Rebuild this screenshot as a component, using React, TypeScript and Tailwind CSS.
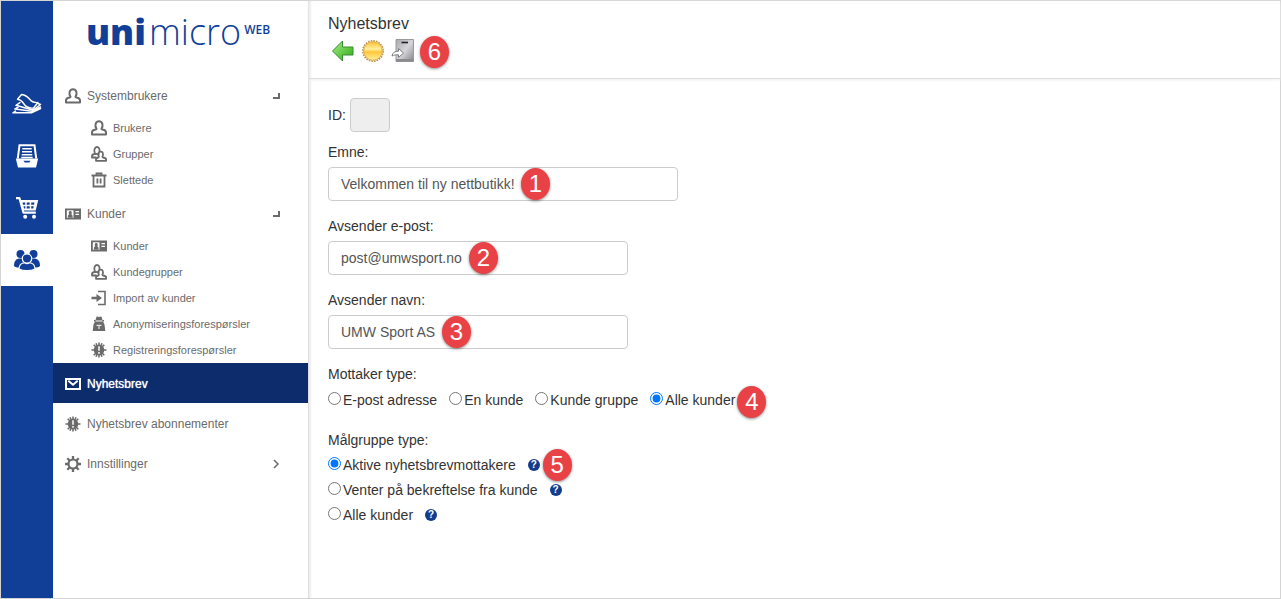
import { useState } from 'react'
import type { ReactNode } from 'react'
import clsx from 'clsx'

type IconProps = { className?: string }

function UserIcon({ className }: IconProps) {
  return (
    <svg viewBox="0 0 16 16" className={className} fill="none" stroke="currentColor" strokeWidth="2" strokeLinejoin="round">
      <path d="M5.500 8.700C4.300 7.500 4.300 5.400 4.600 4C5 2.300 6.300 1.200 8 1.200s3 1.100 3.400 2.800c.3 1.400.3 3.500-.9 4.700c0 .5.300.7.900.800c2.400.3 3.600 1.200 3.600 3V14.500H1v-2c0-1.800 1.200-2.700 3.600-3c.6-.1.900-.3.900-.8z" />
    </svg>
  )
}

function UsersIcon({ className }: IconProps) {
  return (
    <svg viewBox="0 0 16 16" className={className} fill="none" stroke="currentColor" strokeWidth="1.800" strokeLinejoin="round">
      <path d="M5.500 11.500H1v-1.300C1 8.800 2 8.300 3.400 8C4 7.900 4 7.500 3.800 7C3.300 5.900 3.300 3.900 3.600 2.900C4 1.600 4.900 1 6 1s2 .6 2.400 1.900c.3 1 .2 1.900 0 2.900" />
      <path d="M4 8h4.500" />
      <path d="M7.900 10.800C7.200 9.700 7.100 8.200 7.400 7.300C7.800 6.200 8.700 5.600 9.700 5.600s1.900.6 2.200 1.700c.3 1 .1 2.500-.5 3.500c0 .4.200.6.700.7c2 .3 3 .8 3 1.900V14.800H5v-1.400c0-1.100.7-1.600 2.200-1.900c.5-.1.700-.3.700-.7z" />
    </svg>
  )
}

function TrashIcon({ className }: IconProps) {
  return (
    <svg viewBox="0 0 16 16" className={className} fill="none" stroke="currentColor" strokeWidth="1.800">
      <path d="M0.500 3.500h15M2.500 3.500V14.500h11V3.500M5.500 3.500V1.400h5v2.100M6.400 6.500v5M9.600 6.500v5" />
    </svg>
  )
}

function CardIcon({ className }: IconProps) {
  return (
    <svg viewBox="0 0 16 16" className={className}>
      <path d="M0 2.500h16v11H0z" fill="currentColor" />
      <path d="M1.800 4.300h6.700v7.500H1.800z" fill="#fff" />
      <path d="M5.200 5c1.500 0 1.700 1 1.500 2.300l-.4 1.200c1 .3 1.400.8 1.400 3.300H2.800c0-2.500.4-3 1.400-3.300l-.4-1.200C3.600 6 3.800 5 5.200 5z" fill="currentColor" />
      <path d="M10.500 5.700h3.500M10.500 8.300h3.500" stroke="#fff" strokeWidth="1.200" />
    </svg>
  )
}

function ImportIcon({ className }: IconProps) {
  return (
    <svg viewBox="0 0 16 16" className={className}>
      <path d="M7 1.500h7v13H7" fill="none" stroke="currentColor" strokeWidth="1.600" />
      <path d="M0.500 6.800h5V4l5.500 4-5.500 4V9.200h-5z" fill="currentColor" />
    </svg>
  )
}

function AnonymousIcon({ className }: IconProps) {
  return (
    <svg viewBox="0 0 16 16" className={className}>
      <path d="M5.500.7C6.500.2 7 1 8 1s1.500-.8 2.500-.3L11.500 4H13v1.500h-1L13.500 8.500l.8 6.500H1.700l.8-6.500L4 5.500H3V4h1.500z" fill="currentColor" />
      <path d="M4.500 5h7M5.500 9.300h5M8 9.500v3.500" stroke="#fff" strokeWidth="1" />
    </svg>
  )
}

function AlertGearIcon({ className }: IconProps) {
  return (
    <svg viewBox="0 0 16 16" className={className}>
      <circle cx="8" cy="8" r="5.300" fill="currentColor" />
      <path d="M8 .5v15M.5 8h15M2.700 2.700l10.600 10.600M2.700 13.300L13.300 2.700M5 1.200l6 13.600M11 1.200L5 14.800" stroke="currentColor" strokeWidth="1.600" />
      <path d="M8 4.200v4.600M8 10v1.700" stroke="#fff" strokeWidth="1.500" />
    </svg>
  )
}

function GearIcon({ className }: IconProps) {
  return (
    <svg viewBox="0 0 16 16" className={className} fill="none" stroke="currentColor">
      <circle cx="8" cy="8" r="4.500" strokeWidth="2.200" />
      <path d="M8 0v3M8 13V16M0 8h3M13 8H16M2.300 2.300l2.200 2.200M11.500 11.500l2.200 2.200M2.300 13.700l2.200-2.200M11.500 4.500l2.200-2.200" strokeWidth="2.300" />
    </svg>
  )
}

function MailIcon({ className }: IconProps) {
  return (
    <svg viewBox="0 0 16 16" className={className} fill="none" stroke="currentColor" strokeWidth="2">
      <path d="M1 3h14v10H1z" />
      <path d="M3.300 4.800l4.700 4 4.700-4" />
    </svg>
  )
}

function PapersIcon() {
  return (
    <svg viewBox="0 0 30 24" className="w-[30px] h-6" fill="none" stroke="currentColor" strokeLinejoin="round" strokeLinecap="round">
      <path d="M9.500 2.500C13 3 15.500 4.500 17.500 7c2 2.600 4.500 4 8.500 3.500L21.500 16c-4.500.5-7.500-1-9.500-4C10.200 9.300 8.200 7.700 5.500 7.300z" strokeWidth="1.400" />
      <path d="M8 10.500L4 13.300l15.500 4.400 3-.7 6-4.500-2-.8" strokeWidth="1.500" />
      <path d="M6 15.300l-3 1.700 17 2.200 8.500-4.200M3.500 19.200L1 20.800h18.500l9-4.300" strokeWidth="1.600" />
    </svg>
  )
}

function ArchiveIcon() {
  return (
    <svg viewBox="0 0 24 24" className="size-6">
      <path d="M2.800 14.500L4.500 1.200h15l1.700 13.300" fill="none" stroke="currentColor" strokeWidth="2" />
      <path d="M7.300 4.700h9.400M7 7.700h10M6.700 10.700h10.600M6.300 13.500h11.400" stroke="currentColor" strokeWidth="1.600" />
      <path d="M.800 14.500h22.400L21 23.500H3z" fill="currentColor" />
      <path d="M8.500 16.800h7l-1.200 1.700H9.700z" fill="#113f98" />
    </svg>
  )
}

function CartIcon() {
  return (
    <svg viewBox="0 0 24 24" className="size-6">
      <path d="M1 2.200h3.500l4 14.500h12.300" fill="none" stroke="currentColor" strokeWidth="2.200" strokeLinejoin="round" />
      <path d="M5 4h18.200l-2.500 10.500H7.600z" fill="currentColor" />
      <path d="M7.500 6.500h2.700v2.300H8zM11.700 6.500h3v2.300h-3zM16.200 6.500h3.200l-.3 2.300h-2.900zM8.500 10.200h1.800v2.200H9zM11.700 10.200h3v2.200h-3zM16.200 10.200h2.500l-.4 2.200h-2.100z" fill="#113f98" />
      <circle cx="10.200" cy="20.700" r="2" fill="currentColor" />
      <circle cx="19" cy="20.700" r="2" fill="currentColor" />
    </svg>
  )
}

function PeopleIcon() {
  return (
    <svg viewBox="0 0 28 22" className="w-7 h-[22px]" fill="currentColor">
      <circle cx="7.500" cy="5" r="4" />
      <circle cx="20.500" cy="5" r="4" />
      <path d="M1 17c0-5 2-7.500 6.500-7.500h13C25 9.500 27 12 27 17c-1 1-3 1.500-5 1.500H6C4 18.500 2 18 1 17z" />
      <circle cx="14" cy="9.500" r="4.700" stroke="#fff" strokeWidth="1.200" />
      <path d="M6 20c0-4 2.500-6.200 5.500-6.200 1.600 1 3.400 1 5 0 3 0 5.500 2.200 5.500 6.200-4 2.200-12 2.200-16 0z" stroke="#fff" strokeWidth="1.200" />
    </svg>
  )
}

function BackIcon() {
  return (
    <svg viewBox="0 0 24 24" className="size-6">
      <defs>
        <linearGradient id="back" x1="0" y1="0" x2="1" y2="1">
          <stop offset="0" stopColor="#a6f08a" />
          <stop offset="1" stopColor="#2aa80e" />
        </linearGradient>
      </defs>
      <path d="M1.500 12L11.500 2v6H22v8H11.500v6z" fill="url(#back)" stroke="#3c8a35" strokeLinejoin="round" />
    </svg>
  )
}

function NewIcon() {
  return (
    <svg viewBox="0 0 24 24" className="size-6">
      <defs>
        <linearGradient id="sun" x1="0" y1="0" x2="0" y2="1">
          <stop offset="0" stopColor="#ffc12a" />
          <stop offset=".4" stopColor="#fff0a0" />
          <stop offset=".55" stopColor="#ffc638" />
          <stop offset="1" stopColor="#fff2a0" />
        </linearGradient>
      </defs>
      <circle cx="12" cy="12" r="10.200" fill="none" stroke="#bd934e" strokeWidth="1.600" strokeDasharray="1.600 1.070" />
      <circle cx="12" cy="12" r="9.300" fill="url(#sun)" stroke="#dfa945" />
    </svg>
  )
}

function SaveIcon() {
  return (
    <svg viewBox="0 0 24 24" className="size-6">
      <defs>
        <linearGradient id="disk" x1="0" y1="0" x2="1" y2="1">
          <stop offset="0" stopColor="#a8a8ac" />
          <stop offset=".5" stopColor="#d6d6da" />
          <stop offset="1" stopColor="#838388" />
        </linearGradient>
      </defs>
      <path d="M5 .500h17.500V22.500H5z" fill="url(#disk)" stroke="#9a9a9e" />
      <path d="M5 20h17.500v2.500H5z" fill="#8a8a8e" />
      <path d="M10.500 3.500h6.500" stroke="#222" strokeWidth="1.600" />
      <path d="M1 17c.5-3.500 3-4.800 6.500-4.800V9.500l5 4.500-5 4.500v-2.700c-3 0-4.500.2-6.500 1.200z" fill="#fff" stroke="#7e7e82" />
    </svg>
  )
}

function HelpIcon() {
  return (
    <button type="button" aria-label="Hjelp" className="flex size-3 items-center justify-center rounded-full bg-[#143c8c] text-[10px] leading-3 font-bold text-white">
      ?
    </button>
  )
}

function Marker({ className, children }: { className: string; children: ReactNode }) {
  return (
    <span className={clsx('absolute z-10 flex h-8 w-[29px] items-center justify-center rounded-[50%] bg-[#e84246] text-2xl text-white shadow-[0_1px_3px_rgba(0,0,0,0.45)]', className)}>
      {children}
    </span>
  )
}

const groups = [
  {
    label: 'Systembrukere',
    Icon: UserIcon,
    items: [
      { label: 'Brukere', Icon: UserIcon },
      { label: 'Grupper', Icon: UsersIcon },
      { label: 'Slettede', Icon: TrashIcon },
    ],
  },
  {
    label: 'Kunder',
    Icon: CardIcon,
    items: [
      { label: 'Kunder', Icon: CardIcon },
      { label: 'Kundegrupper', Icon: UsersIcon },
      { label: 'Import av kunder', Icon: ImportIcon },
      { label: 'Anonymiseringsforespørsler', Icon: AnonymousIcon },
      { label: 'Registreringsforespørsler', Icon: AlertGearIcon },
    ],
  },
]

const rail = [
  { label: 'Innhold', Icon: PapersIcon },
  { label: 'Arkiv', Icon: ArchiveIcon },
  { label: 'Butikk', Icon: CartIcon },
  { label: 'Kunder', Icon: PeopleIcon, active: true },
]

const fields = [
  { id: 'emne', label: 'Emne:', value: 'Velkommen til ny nettbutikk!', width: 'w-[350px]', marker: 'left-[193px]' },
  { id: 'epost', label: 'Avsender e-post:', value: 'post@umwsport.no', width: 'w-[300px]', marker: 'left-[141px]' },
  { id: 'navn', label: 'Avsender navn:', value: 'UMW Sport AS', width: 'w-[300px]', marker: 'left-[114px]' },
]

const receivers = ['E-post adresse', 'En kunde', 'Kunde gruppe', 'Alle kunder']
const targets = ['Aktive nyhetsbrevmottakere', 'Venter på bekreftelse fra kunde', 'Alle kunder']

function Radio({ name, label, checked, onChange }: { name: string; label: string; checked: boolean; onChange: () => void }) {
  return (
    <label className="flex gap-[2px] whitespace-nowrap">
      <input type="radio" name={name} checked={checked} onChange={onChange} className="mt-[2px] size-[13px]" />
      {label}
    </label>
  )
}

function Sidebar() {
  return (
    <aside className="w-[255px] shrink-0 text-xs text-[#6b6b6b]">
      <a href="#" className="flex h-[74px] items-start pl-[33px] pt-[11px] font-['Open_Sans',sans-serif] text-[#113f98]">
        <span className="text-4xl font-extrabold">uni</span>
        <span className="ml-[3px] text-4xl font-light">micro</span>
        <span className="ml-[3px] pt-[10px] text-xs font-semibold">WEB</span>
      </a>
      <nav>
        {groups.map(({ label, Icon, items }) => (
          <div key={label}>
            <a href="#" className="flex h-10 items-center gap-[6px] pl-3 pr-7 pt-[2px]">
              <Icon className="size-4" />
              <span className="flex-1">{label}</span>
              <span className="h-[6px] w-[7px] border-b-2 border-r-2 border-[#6b6b6b]" />
            </a>
            {items.map(item => (
              <a key={item.label} href="#" className="flex h-[26px] items-center gap-[6px] pl-[38px] text-[11px]">
                <item.Icon className="size-4" />
                {item.label}
              </a>
            ))}
          </div>
        ))}
        <a href="#" className="flex h-10 items-center gap-[6px] bg-[#0c2c6c] pl-3 pt-[2px] text-white [text-shadow:0_0_1px_#fff]">
          <MailIcon className="size-4" />
          Nyhetsbrev
        </a>
        <a href="#" className="flex h-10 items-center gap-[6px] pl-3 pt-[2px]">
          <AlertGearIcon className="size-4" />
          Nyhetsbrev abonnementer
        </a>
        <a href="#" className="flex h-10 items-center gap-[6px] pl-3 pr-7 pt-[2px]">
          <GearIcon className="size-4" />
          <span className="flex-1">Innstillinger</span>
          <svg viewBox="0 0 8 10" className="h-[10px] w-2" fill="none" stroke="currentColor" strokeWidth="1.500">
            <path d="M2 1l4 4-4 4" />
          </svg>
        </a>
      </nav>
    </aside>
  )
}

export default function App() {
  const [values, setValues] = useState<Record<string, string>>(Object.fromEntries(fields.map(f => [f.id, f.value])))
  const [receiver, setReceiver] = useState(3)
  const [target, setTarget] = useState(0)

  return (
    <div className="flex min-h-screen border border-[#d4d4d4] bg-white font-['Liberation_Sans',Arial,sans-serif] text-sm text-[#333]">
      <nav className="w-[52px] shrink-0 bg-[#113f98] pt-[77px]">
        {rail.map(({ label, Icon, active }) => (
          <a key={label} href="#" aria-label={label} className={clsx('flex h-[52px] items-center justify-center', active ? 'bg-white text-[#113f98]' : 'text-white')}>
            <Icon />
          </a>
        ))}
      </nav>
      <Sidebar />
      <main className="min-w-0 flex-1 border-l border-[#dedede] shadow-[inset_3px_0_2px_-1px_#eeeeee]">
        <header className="h-[78px] border-b border-[#dedede] pl-[19px] pt-[11px] shadow-[0_1px_3px_#eeeeee]">
          <h1 className="text-base">Nyhetsbrev</h1>
          <div className="relative flex w-fit gap-[6px] pl-[3px] pt-[3px]">
            <button type="button" aria-label="Tilbake"><BackIcon /></button>
            <button type="button" aria-label="Ny"><NewIcon /></button>
            <button type="button" aria-label="Lagre"><SaveIcon /></button>
            <Marker className="left-full top-0 ml-[5px]">6</Marker>
          </div>
        </header>
        <form className="pb-8 pl-[19px] pt-[19px]" onSubmit={e => e.preventDefault()}>
          <div className="mb-[10px] flex items-center gap-1">
            <label htmlFor="id">ID:</label>
            <input id="id" disabled className="h-[34px] w-10 rounded border border-[#ccc] bg-[#eee]" />
          </div>
          {fields.map((f, i) => (
            <div key={f.id} className="mb-[15px]">
              <label htmlFor={f.id} className="mb-[5px] block">{f.label}</label>
              <div className={clsx('relative', f.width)}>
                <input
                  id={f.id}
                  type="text"
                  value={values[f.id]}
                  onChange={e => setValues({ ...values, [f.id]: e.target.value })}
                  className="block h-[34px] w-full rounded border border-[#ccc] px-3 text-[#555]"
                />
                <Marker className={clsx('top-[1px]', f.marker)}>{i + 1}</Marker>
              </div>
            </div>
          ))}
          <fieldset className="pt-px">
            <legend className="mb-[5px]">Mottaker type:</legend>
            <div className="relative flex w-fit gap-3">
              {receivers.map((label, i) => (
                <Radio key={label} name="mottaker" label={label} checked={receiver === i} onChange={() => setReceiver(i)} />
              ))}
              <Marker className="left-full -top-1 ml-[2px]">4</Marker>
            </div>
          </fieldset>
          <fieldset className="mt-5">
            <legend className="mb-[5px]">Målgruppe type:</legend>
            {targets.map((label, i) => (
              <div key={label} className="relative mb-[5px] flex w-fit items-center gap-3">
                <Radio name="malgruppe" label={label} checked={target === i} onChange={() => setTarget(i)} />
                <HelpIcon />
                {i === 0 && <Marker className="left-full ml-[3px]">5</Marker>}
              </div>
            ))}
          </fieldset>
        </form>
      </main>
    </div>
  )
}
